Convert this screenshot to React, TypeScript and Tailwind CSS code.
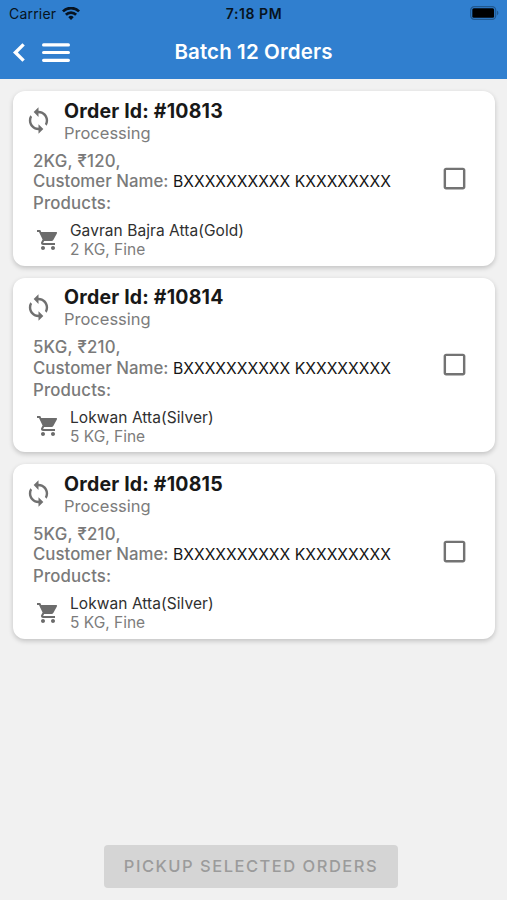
import type React from "react";
import { MdCheckBoxOutlineBlank, MdShoppingCart, MdSync } from "react-icons/md";

interface Order {
  id: string;
  status: string;
  weight: string;
  price: string;
  customer: string;
  product: string;
  detail: string;
}

const orders: Order[] = [
  {
    id: "10813",
    status: "Processing",
    weight: "2KG",
    price: "₹120",
    customer: "BXXXXXXXXXX KXXXXXXXX",
    product: "Gavran Bajra Atta(Gold)",
    detail: "2 KG, Fine",
  },
  {
    id: "10814",
    status: "Processing",
    weight: "5KG",
    price: "₹210",
    customer: "BXXXXXXXXXX KXXXXXXXX",
    product: "Lokwan Atta(Silver)",
    detail: "5 KG, Fine",
  },
  {
    id: "10815",
    status: "Processing",
    weight: "5KG",
    price: "₹210",
    customer: "BXXXXXXXXXX KXXXXXXXX",
    product: "Lokwan Atta(Silver)",
    detail: "5 KG, Fine",
  },
];

const WifiIcon: React.FC = () => (
  <svg className="ml-[6px] h-[14px] w-[18px]" viewBox="0 0 18 14" fill="none" stroke="#071320" strokeWidth="2.7">
    <path d="M0.9 4.4a11.5 11.5 0 0 1 16.2 0" />
    <path d="M3.9 7.8a7.2 7.2 0 0 1 10.2 0" />
    <path d="M9 12.9 6.3 10.2a3.8 3.8 0 0 1 5.4 0z" fill="#071320" stroke="none" />
  </svg>
);

const BatteryIcon: React.FC = () => (
  <svg className="mb-px h-[14px] w-[29px]" viewBox="0 0 29 14">
    <rect x="0.7" y="0.7" width="25" height="12.6" rx="3.6" fill="none" stroke="#20588f" strokeWidth="1.2" />
    <rect x="2.3" y="2.3" width="21.8" height="9.4" rx="1.5" fill="#000" />
    <path d="M27 4.8c1.8.6 1.8 3.8 0 4.4z" fill="#20588f" />
  </svg>
);

const Header: React.FC = () => (
  <header className="h-[79px] bg-[#307fcf]">
    <div className="grid h-[27px] grid-cols-3 items-center pr-[8px] pl-[9px] text-[#071320] text-[14px]">
      <div className="flex items-center">
        <span className="tracking-[0.2px]">Carrier</span>
        <WifiIcon />
      </div>
      <span className="text-center font-semibold text-[14px] tracking-[0.55px]">7:18 PM</span>
      <div className="flex justify-end">
        <BatteryIcon />
      </div>
    </div>
    <div className="grid h-[51px] grid-cols-[1fr_auto_1fr] items-center">
      <div className="flex items-center gap-4 pl-3">
        <svg className="h-5 w-[14px]" viewBox="0 0 14 20" fill="none" stroke="#fff" strokeWidth="3.4">
          <path d="M11.6 1.4 3.4 9.5l8.2 8.1" />
        </svg>
        <svg className="h-5 w-7" viewBox="0 0 28 20" fill="none" stroke="#fff" strokeWidth="3.2" strokeLinecap="round">
          <path d="M1.6 1.9h24.8M1.6 9.5h24.8M1.6 17.3h24.8" />
        </svg>
      </div>
      <h1 className="font-semibold text-[20.5px] text-white tracking-[0.12px]">Batch 12 Orders</h1>
      <div />
    </div>
  </header>
);

const OrderCard: React.FC<{ order: Order }> = ({ order }) => (
  <article className="flex h-[174.5px] items-center rounded-[12px] bg-white shadow-[0_2px_5px_rgba(0,0,0,0.2)]">
    <div className="h-full flex-1 pt-[8.5px]">
      <div className="flex items-center">
        <MdSync className="mb-[2px] ml-[11px] size-[29px] text-[#707070]" />
        <div className="ml-[11px]">
          <h2 className="font-bold text-[#181818] text-[19.5px] leading-[23px] tracking-[0.2px]">
            Order Id: #{order.id}
          </h2>
          <p className="text-[#7c7c7c] text-[16.5px] leading-[21px]">{order.status}</p>
        </div>
      </div>
      <div className="mt-[7px] ml-[20px] font-medium text-[#7a7a7a] text-[16.8px] leading-[20.8px]">
        <p className="tracking-[0.25px]">
          {order.weight}, {order.price},
        </p>
        <p className="whitespace-nowrap">
          <span className="tracking-[0.04px]">Customer Name: </span>
          <span className="font-normal text-[#151515] text-[15.7px]">{order.customer}</span>
        </p>
        <p className="tracking-[0.15px]">Products:</p>
      </div>
      <div className="mt-[7.5px] ml-[22px] flex items-center">
        <MdShoppingCart className="mb-px ml-px size-[24px] text-[#6c6c6c]" />
        <div className="ml-[10px]">
          <p className="text-[#303030] text-[15.5px] leading-[19px] tracking-[0.06px]">{order.product}</p>
          <p className="text-[#7c7c7c] text-[15.5px] leading-[19px]">{order.detail}</p>
        </div>
      </div>
    </div>
    <MdCheckBoxOutlineBlank className="mr-[26px] size-[29px] text-[#737373]" />
  </article>
);

export default function App() {
  return (
    <div className="flex h-[900px] w-[507px] flex-col bg-[#f1f1f1] font-['Inter',sans-serif]">
      <Header />
      <main className="flex flex-1 flex-col gap-3 pt-3 pr-[12.5px] pl-[13px]">
        {orders.map((order) => (
          <OrderCard key={order.id} order={order} />
        ))}
      </main>
      <footer className="pb-[12px] pl-[104px]">
        <button
          type="button"
          disabled
          className="h-[43px] w-[294px] rounded-[4px] bg-[#d5d5d5] font-medium text-[#9b9b9b] text-[16.5px] tracking-[1.5px]"
        >
          PICKUP SELECTED ORDERS
        </button>
      </footer>
    </div>
  );
}
